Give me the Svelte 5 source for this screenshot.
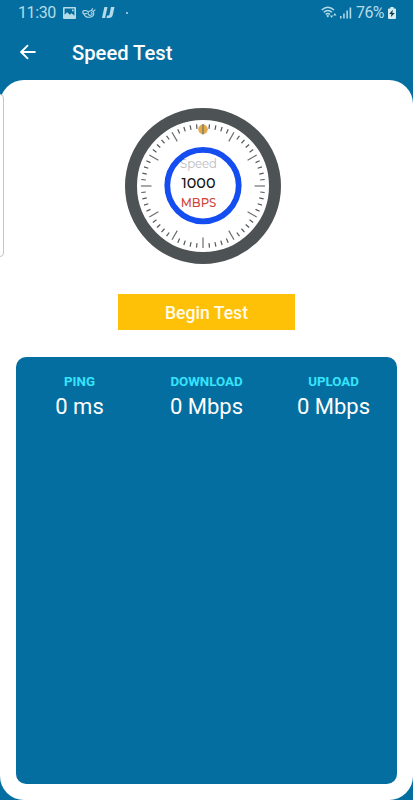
<script>
	const ticks = Array.from({ length: 60 }, (_, i) => i);

	let stats = [
		{ label: 'PING', value: '0 ms' },
		{ label: 'DOWNLOAD', value: '0 Mbps' },
		{ label: 'UPLOAD', value: '0 Mbps' }
	];
</script>

<div class="screen">
	<div class="status">
		<span class="time">11:30</span>
		<svg class="image" width="13" height="12" viewBox="0 0 13 12">
			<path
				fill="currentColor"
				fill-rule="evenodd"
				d="M1 0h11q1 0 1 1v10q0 1-1 1H1q-1 0-1-1V1q0-1 1-1zM1.6 1.6v6.2l2.6-2.6 2.6 2.6 1.8-1.5 2.8 2.4V1.6zM9 2.5h1.6v1.7H9z"
			/>
		</svg>
		<svg class="bird" width="14" height="12" viewBox="0 0 14 12" fill="none" stroke="currentColor" stroke-width="1.1">
			<path d="M6 4.4C3 2.7.6 3.7.7 5.4c.1 1.4 2.4 1.8 4.2.8M1.8 6.7c.8 2 2.3 3.5 4.7 3.6 3.5.1 5.8-1.8 5.3-4.5-.4-2-3.3-2.9-5.1-1.2-1.7 1.8-.3 4.2 2 3.7 1.9-.4 1.9-2.7.2-2.7M9.6 3.4l1-2.2M11.2 4.4l2.2-1.8" />
		</svg>
		<svg class="mark" width="13" height="12" viewBox="0 0 13 12">
			<path fill="currentColor" d="M2.4 0h3.1L3.1 11H0zM9 0h3.5l-1.7 7.8Q10 11 6.8 11H4.5l.6-2.5h1.4q.8 0 1-.9z" />
		</svg>
		<span class="dot"></span>
		<svg class="wifi" width="16" height="13" viewBox="0 0 16 13" fill="none" stroke="currentColor">
			<path stroke-width="1.5" d="M.7 4Q6.8-1.5 13 4M2.7 6.3q4.1-3.7 8.3 0M4.7 8.4q2.1-1.8 4.3 0" />
			<path fill="currentColor" stroke="none" d="M5.3 9.7q1.5-1.2 3 0L6.8 11.4zM9 9.4h3.2L10.6 12zM12.2 9.4L13.8 7l1.7 2.4z" />
		</svg>
		<svg class="signal" width="12" height="12" viewBox="0 0 12 12" fill="currentColor">
			<path d="M0 9h1.5v2.5H0zM3.2 6.4h1.5v5.1H3.2zM6.4 3.5h1.5v8H6.4zM9.6.5h1.6v11H9.6z" />
		</svg>
		<span class="percent">76%</span>
		<svg class="battery" width="8" height="12" viewBox="0 0 8 12">
			<path fill="#d5edf2" d="M2.4 0h3.2v1.4H7q1 0 1 1V11q0 1-1 1H1q-1 0-1-1V2.4q0-1 1-1h1.4z" />
			<path fill="#12384a" d="M4.8 2.8L1.2 7h2.2l-.5 3.1L6.8 6H4.4z" />
		</svg>
	</div>

	<header>
		<svg width="16" height="16" viewBox="0 0 16 16" fill="none" stroke="#fff" stroke-width="1.9">
			<path d="M15.6 8H1.5M8 1.2L1.2 8 8 14.8" />
		</svg>
		<h1>Speed Test</h1>
	</header>

	<main>
		<div class="edge"></div>

		<svg class="gauge" width="156" height="156" viewBox="-78 -78 156 156">
			<circle r="72" fill="#fff" stroke="#4d5254" stroke-width="12" />
			<circle cy="-56.7" r="4.8" fill="#e2aa4b" />
			{#each ticks as i}
				<line
					y1="-62"
					y2={i % 5 === 0 ? -51.5 : -57.5}
					stroke={i % 5 === 0 ? '#6b6e70' : '#54585a'}
					stroke-width="1.2"
					transform="rotate({i * 6})"
				/>
			{/each}
			<text class="caption" x="-4.5" y="-18" textLength="37" lengthAdjust="spacingAndGlyphs">Speed</text>
			<circle cy="-.4" r="35.7" fill="none" stroke="#144df0" stroke-width="5.8" />
			<text class="speed" x="-4.5" y="2" textLength="34" lengthAdjust="spacingAndGlyphs">1000</text>
			<text class="unit" x="-4.5" y="20.5" textLength="35.5" lengthAdjust="spacingAndGlyphs">MBPS</text>
		</svg>

		<button>Begin Test</button>

		<section>
			{#each stats as s}
				<div class="stat">
					<span class="label">{s.label}</span>
					<span class="value">{s.value}</span>
				</div>
			{/each}
		</section>
	</main>
</div>

<style>
	:global(body) {
		background: #056ea0;
	}

	.screen {
		height: 800px;
		display: flex;
		flex-direction: column;
		overflow: hidden;
		background: #056ea0;
		font-family: Roboto, sans-serif;
	}

	.status {
		height: 25px;
		flex: none;
		box-sizing: border-box;
		display: flex;
		align-items: center;
		padding: 0 17px 0 18px;
		color: #b5dbe8;
		font-size: 16px;
		line-height: 25px;
	}
	.time {
		width: 45px;
		letter-spacing: -0.4px;
	}
	.bird {
		margin-left: 6px;
	}
	.mark {
		margin-left: 6px;
	}
	.dot {
		width: 2px;
		height: 2px;
		margin-left: 11px;
		border-radius: 50%;
		background: currentColor;
	}
	.wifi {
		margin-left: auto;
	}
	.signal {
		margin-left: 3px;
	}
	.percent {
		width: 29px;
		margin-left: 4px;
		letter-spacing: -0.6px;
	}
	.battery {
		margin-left: 3px;
	}

	header {
		height: 55px;
		flex: none;
		box-sizing: border-box;
		display: flex;
		align-items: center;
		gap: 36px;
		padding: 0 20px 1px;
	}
	h1 {
		margin: 0;
		padding-top: 2px;
		color: #fff;
		font-size: 20.2px;
		font-weight: 500;
		line-height: 24px;
	}

	main {
		position: relative;
		flex: 1;
		display: flex;
		flex-direction: column;
		align-items: center;
		box-sizing: border-box;
		padding: 28px 16px 16px;
		border-radius: 24px;
		background: #fff;
	}

	/* edge panel handle, sits over the sheet */
	.edge {
		position: absolute;
		top: 14px;
		left: -5px;
		width: 7px;
		height: 161px;
		border: 1px solid #c3c6ca;
		border-radius: 4px;
		background: #fff;
	}

	.gauge {
		flex: none;
		margin-right: 7px;
	}
	.gauge text {
		font-family: Montserrat, Lato, sans-serif;
		text-anchor: middle;
	}
	.caption {
		fill: #bbbcbe;
		font-size: 12.5px;
	}
	.speed {
		fill: #161616;
		font-size: 14.5px;
		font-weight: 500;
	}
	.unit {
		fill: #d04438;
		font-size: 12.5px;
		font-weight: 500;
	}

	button {
		flex: none;
		width: 177px;
		height: 36px;
		margin-top: 30px;
		padding: 1px 0 0;
		border: 0;
		background: #ffc107;
		color: #fffbea;
		font-family: inherit;
		font-size: 17.6px;
		font-weight: 500;
	}

	section {
		flex: 1;
		align-self: stretch;
		box-sizing: border-box;
		display: grid;
		grid-template-columns: repeat(3, 1fr);
		align-items: start;
		margin-top: 27px;
		padding-top: 16px;
		border-radius: 10px;
		background: #056ea0;
	}
	.stat {
		display: flex;
		flex-direction: column;
		align-items: center;
	}
	.label {
		color: #35e5fc;
		font-size: 13.3px;
		font-weight: 700;
		line-height: 18px;
	}
	.value {
		color: #fff;
		font-size: 22px;
		line-height: 31px;
	}
</style>
